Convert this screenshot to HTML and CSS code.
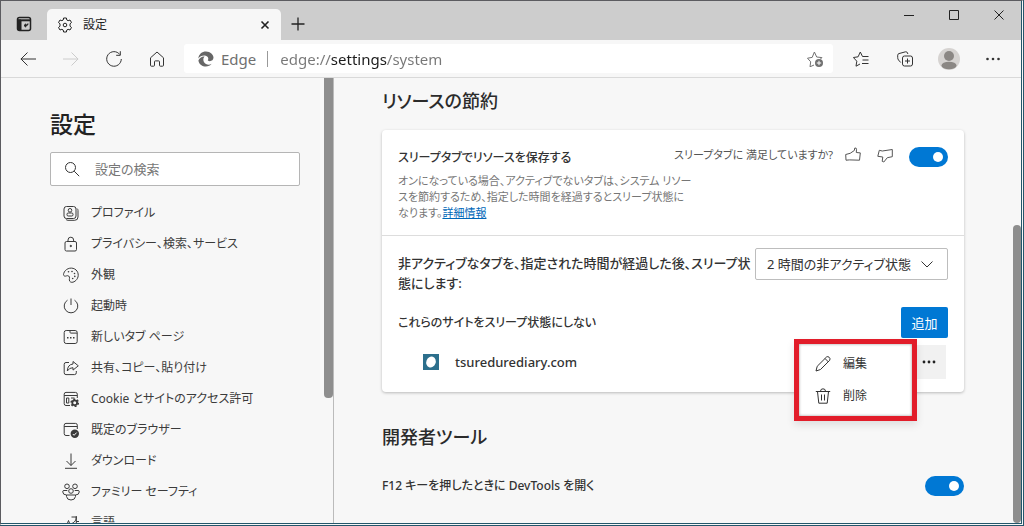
FILE: index.html
```html
<!DOCTYPE html>
<html lang="ja">
<head>
<meta charset="utf-8">
<meta name="viewport" content="width=device-width, initial-scale=1">
<title>設定</title>
<link rel="stylesheet" href="styles.css">
</head>
<body>
<div class="window">
  <header class="titlebar">
    <button class="tab-actions" aria-label="タブ操作メニュー"><svg class="icon" viewBox="0 0 16 16"><rect x="1.500" y="1.500" width="13" height="13" rx="2" stroke-width="1.500"/><path d="M1.500 4.300h13" stroke-width="2"/><path d="M2 4h3v10H3l-1-1z" fill="currentColor"/><path d="M8 9.500l1.800-1.600v3.200zM9 9.500h1.700q1.300 0 1.300-2" fill="currentColor"/></svg></button>
    <div class="tab">
      <svg class="icon" viewBox="0 0 16 16"><path d="M6.600 1h2.800l.4 2 1.300.7 1.900-.7 1.500 2.500-1.500 1.300v2.400l1.500 1.300-1.500 2.500-1.900-.7-1.300.7-.4 2H6.600l-.4-2-1.300-.7-1.900.7-1.500-2.500L3 9.200V6.800L1.500 5.500 3 3l1.900.7L6.200 3z"/><circle cx="8" cy="8" r="1.800"/></svg>
      <span class="tab-title">設定</span>
      <button class="tab-close" aria-label="タブを閉じる"><svg class="icon-tiny" viewBox="0 0 10 10"><path d="M1.500 1.500l7 7M8.500 1.500l-7 7" stroke-width="1.600"/></svg></button>
    </div>
    <button class="new-tab" aria-label="新しいタブ"><svg class="icon" viewBox="0 0 16 16"><path d="M8 1.500v13M1.500 8h13" stroke-width="1.300"/></svg></button>
    <div class="window-controls">
      <button aria-label="最小化"><svg class="icon-tiny" viewBox="0 0 10 10"><path d="M0 5.500h10"/></svg></button>
      <button aria-label="最大化"><svg class="icon-tiny" viewBox="0 0 10 10"><path d="M.5.5h9v9h-9z"/></svg></button>
      <button aria-label="閉じる"><svg class="icon-tiny" viewBox="0 0 10 10"><path d="M.5.5l9 9M9.500.5l-9 9"/></svg></button>
    </div>
  </header>

  <div class="toolbar">
    <div class="nav-buttons">
      <button aria-label="戻る"><svg class="icon" viewBox="0 0 16 16"><path d="M16 8H.8M7.500 1.500L1 8l6.500 6.500"/></svg></button>
      <button aria-label="進む" disabled><svg class="icon" viewBox="0 0 16 16"><path d="M0 8h15.200M8.500 1.500L15 8l-6.500 6.500"/></svg></button>
      <button aria-label="更新"><svg class="icon" viewBox="0 0 16 16"><path d="M13.800 3.500A7.300 7.300 0 1 0 15.300 8M14.300.2v4.100h-4.100"/></svg></button>
      <button aria-label="ホーム"><svg class="icon" viewBox="0 0 16 16"><path d="M1.500 6.800L8 1l6.500 5.800v7.500q0 .9-.9.900h-2.300q-.8 0-.8-.9v-3.600q0-.8-.8-.8H6.300q-.8 0-.8.800v3.600q0 .9-.8.900H2.400q-.9 0-.9-.9z"/></svg></button>
    </div>
    <form class="address-bar">
      <svg class="icon edge-mark" viewBox="0 0 16 16"><path d="M.3 7.500C.8 3 4 .4 8 .4c4.400 0 7.500 3.200 7.500 6.200 0 2.300-1.700 3.600-3.700 3.600-1.400 0-2.200-.5-2-1 .8-1 .7-2.700-.6-3.800C6.800 3.500 2 4.600.3 7.500zM.4 9.500C1.300 6.800 4.300 5 6.600 5.500 5 7.100 5 9.500 6.100 11.300c1.400 2.100 4.600 3.200 7.500 1.500-3 4.500-12 3.700-13.200-3.300z" fill="currentColor" stroke="none"/></svg>
      <label class="address-label" for="url">Edge</label>
      <input class="address-input" id="url" type="text" value="edge://settings/system">
      <button class="add-favorite" type="button" aria-label="お気に入りに追加"><svg class="icon" viewBox="0 0 16 16"><path d="M7 14l-4 1.800.7-5L.5 7.200l4.700-.8L7.400 1l2.300 5 5.200.6-1.600 1.600"/><circle cx="12" cy="12" r="4" fill="currentColor" stroke="none"/><path d="M12 9.800v4.400M9.800 12h4.400" stroke="#fff"/></svg></button>
    </form>
    <div class="browser-actions">
      <button aria-label="お気に入り"><svg class="icon" viewBox="0 0 16 16"><path d="M7 13l-4 2.200.8-5L.4 6.500l4.700-.7L7.300 1l2.200 4.500h6M9.500 9h6M9 12.500h6.500"/></svg></button>
      <button aria-label="コレクション"><svg class="icon" viewBox="0 0 16 16"><rect x="5.500" y="5" width="10" height="10" rx="2"/><path d="M10.500 7.500v5M8 10h5M3.700 11.500L1.500 9Q.7 8 .7 6.500V4.200q0-1.200 1.200-1.600L8.500.8q1.500-.3 2 1.200l.4 1"/></svg></button>
      <button class="avatar" aria-label="プロファイル"><svg viewBox="0 0 22 22"><circle cx="11" cy="11" r="11" fill="#d6d3d1"/><circle cx="11" cy="8" r="5" fill="#8b8784"/><ellipse cx="11" cy="17.500" rx="7.500" ry="3.800" fill="#8b8784"/></svg></button>
      <button aria-label="設定など"><svg class="icon" viewBox="0 0 16 16"><g fill="currentColor" stroke="none"><circle cx="2.500" cy="8" r="1.300"/><circle cx="8" cy="8" r="1.300"/><circle cx="13.500" cy="8" r="1.300"/></g></svg></button>
    </div>
  </div>

  <div class="page">
    <aside class="sidebar">
      <div class="sidebar-content">
        <h1>設定</h1>
        <label class="search">
          <svg class="icon" viewBox="0 0 16 16"><circle cx="6.500" cy="6.500" r="5"/><path d="M10.200 10.200l5 5"/></svg>
          <input type="search" placeholder="設定の検索" aria-label="設定の検索">
        </label>
        <nav class="menu">
          <a href="#profile"><svg class="icon" viewBox="0 0 16 16"><rect x="1" y="1.500" width="12" height="12" rx="2.500"/><path d="M14 3.500q1 .8 1 2V12q0 3.300-3.300 3.300H5q-1.400 0-2.200-1.200"/><circle cx="7" cy="5.300" r="1.800"/><rect x="4" y="8" width="6" height="3" rx="1.200"/></svg>プロファイル</a>
          <a href="#privacy"><svg class="icon" viewBox="0 0 16 16"><rect x="2" y="5.500" width="11.500" height="9.500" rx="1.500"/><path d="M5 5.500V4a2.800 2.800 0 0 1 5.600 0v1.500"/><circle cx="7.800" cy="10" r=".7" fill="currentColor"/></svg>プライバシー、検索、サービス</a>
          <a href="#appearance"><svg class="icon" viewBox="0 0 16 16"><path d="M.7 6.500C2 2 7.500-.3 11.700 2c4 2.200 4.500 7.500 2 10.500-2 2.700-5.500 3.800-7 1.700-1.100-1.700.8-4-1-5.200C4 8 2.900 9.700 1.400 9 .5 8.500.3 7.700.7 6.500z"/><g fill="currentColor" stroke="none"><circle cx="5.500" cy="4.700" r=".8"/><circle cx="9" cy="4.500" r=".8"/><circle cx="11.500" cy="6.500" r=".8"/><circle cx="11.800" cy="9.400" r=".8"/><circle cx="9.700" cy="11.500" r=".8"/></g></svg>外観</a>
          <a href="#startup"><svg class="icon" viewBox="0 0 16 16"><path d="M4.500 2.200a6.800 6.800 0 1 0 7 0M8 .5V7"/></svg>起動時</a>
          <a href="#newtab"><svg class="icon" viewBox="0 0 16 16"><rect x="1.200" y="1.500" width="13" height="13" rx="2"/><path d="M7 1.500v1.800q0 .8.800.8h6.400"/><path d="M4 8.700h1.500M7 8.700h1.500M10 8.700h1.500" stroke-width="1.500"/></svg>新しいタブ ページ</a>
          <a href="#share"><svg class="icon" viewBox="0 0 16 16"><path d="M6 2.500H3q-1.800 0-1.800 1.800v8.500q0 1.800 1.800 1.800h8.500q1.800 0 1.800-1.800V11"/><path d="M10 1.500l5.300 4.300-5.300 4.300V7.700Q6.500 7.500 4.300 11q.3-6.500 5.700-7z"/></svg>共有、コピー、貼り付け</a>
          <a href="#permissions"><svg class="icon" viewBox="0 0 16 16"><path d="M7 14.500H3q-1.800 0-1.800-1.800V3.200q0-1.800 1.800-1.800h9.500q1.800 0 1.800 1.800V7M1.200 4.500h13"/><path d="M3.500 7h2.300v5H3.500zM8 7h3.500"/><circle cx="11.700" cy="11.800" r="2.400" stroke-width="1.800"/><circle cx="11.700" cy="11.800" r="3.600" stroke-width="1.500" stroke-dasharray="1.900 1.870"/></svg>Cookie とサイトのアクセス許可</a>
          <a href="#default-browser"><svg class="icon" viewBox="0 0 16 16"><path d="M6.500 13.500H3q-1.800 0-1.800-1.800V3.200q0-1.800 1.800-1.800h9.500q1.800 0 1.800 1.800V7M1.200 4.500h13"/><circle cx="11.800" cy="11.800" r="4.200" fill="currentColor" stroke="none"/><path d="M9.800 12l1.300 1.300 2.500-2.700" stroke="#f7f7f7"/></svg>既定のブラウザー</a>
          <a href="#downloads"><svg class="icon" viewBox="0 0 16 16"><path d="M8 .5v12M3.500 8L8 12.500 12.500 8M2 15.300h12"/></svg>ダウンロード</a>
          <a href="#family"><svg class="icon icon-wide" viewBox="0 0 18 18"><circle cx="5" cy="3.300" r="2.300"/><circle cx="13" cy="3.300" r="2.300"/><circle cx="9" cy="8" r="2.300"/><path d="M5.300 7.500H2Q.7 7.500.7 8.800q.2 3.200 3.800 3.200M12.700 7.500H16q1.300 0 1.300 1.300-.2 3.200-3.800 3.200M4.500 12h9v1.500q-.5 3.500-4.500 3.500t-4.500-3.500z"/></svg>ファミリー セーフティ</a>
          <a href="#languages"><svg class="icon" viewBox="0 0 16 16"><path d="M2.500 13.500l3-8 3 8M3.500 11h4M8.500 2h4.800q0 4.500-4.300 6.500M13.300 1v14M13.300 6.500H16"/></svg>言語</a>
        </nav>
      </div>
      <div class="scroll-track"><div class="scroll-thumb scroll-thumb-top"></div></div>
    </aside>

    <main class="content">
      <div class="settings">
        <section>
          <h2>リソースの節約</h2>
          <div class="card">
            <div class="card-row sleeping">
              <div class="sleeping-text">
                <label class="setting-title" for="sleep-toggle">スリープタブでリソースを保存する</label>
                <p class="description">オンになっている場合、アクティブでないタブは、システム リソー<br>スを節約するため、指定した時間を経過するとスリープ状態に<br>なります。<a href="#details">詳細情報</a></p>
              </div>
              <div class="feedback">
                <span>スリープタブに 満足していますか?</span>
                <button aria-label="満足"><svg class="icon" viewBox="0 0 16 16"><path d="M.7 7.500l4.500-1.200L9.300 3.500 9.800 1q1.800-.3 1.700 1.300l-.2 3.200 4 .4-.8 7.300-10-.3L1 13.200z"/></svg></button>
                <button aria-label="不満"><svg class="icon" viewBox="0 0 16 16"><path d="M2.300 3.300l3 .7 10-1.500v7.200l-5 1-3.500 4.300-1.600-.7.600-4.300L.8 9.300z"/></svg></button>
              </div>
              <input class="toggle" id="sleep-toggle" type="checkbox" role="switch" checked>
            </div>
            <div class="card-row timeout">
              <label for="timeout">非アクティブなタブを、指定された時間が経過した後、スリープ状<br>態にします:</label>
              <div class="select-box">
                <select id="timeout"><option>2 時間の非アクティブ状態</option></select>
                <svg class="chevron" viewBox="0 0 12 12"><path d="M.5 3.500L6 9l5.500-5.500"/></svg>
              </div>
            </div>
            <div class="card-row sites">
              <span>これらのサイトをスリープ状態にしない</span>
              <button class="add-button">追加</button>
            </div>
            <div class="card-row site">
              <svg class="favicon" viewBox="0 0 16 16"><path fill="#2c6f8c" d="M0 0h16v16H0z"/><ellipse cx="8" cy="8" rx="4.700" ry="5.600" fill="#fff" transform="rotate(20 8 8)"/></svg>
              <span class="site-name">tsuredurediary.com</span>
              <button class="more-button" aria-label="その他のアクション"><svg class="icon" viewBox="0 0 16 16"><g fill="currentColor" stroke="none"><circle cx="3" cy="8" r="1.400"/><circle cx="8" cy="8" r="1.400"/><circle cx="13" cy="8" r="1.400"/></g></svg></button>
              <div class="popup" role="menu">
                <button role="menuitem"><svg class="icon" viewBox="0 0 16 16"><path d="M1 15l1.200-4.700L11.500 1q1.300-1 2.700.3t.5 3L5.500 13.500zM10 2.500L13.500 6"/></svg>編集</button>
                <button role="menuitem"><svg class="icon" viewBox="0 0 16 16"><path d="M.8 3.500h14.400M5.500 3.300Q5.500.8 8 .8t2.500 2.500M2.500 3.700l1.300 11.500h8.400l1.300-11.500M6.500 6.500v6M9.500 6.500v6"/></svg>削除</button>
              </div>
            </div>
          </div>
        </section>
        <section>
          <h2>開発者ツール</h2>
          <div class="devtools">
            <label for="f12">F12 キーを押したときに DevTools を開く</label>
            <input class="toggle" id="f12" type="checkbox" role="switch" checked>
          </div>
        </section>
      </div>
      <div class="scroll-track scroll-track-end"><div class="scroll-thumb scroll-thumb-end"></div></div>
    </main>
  </div>
</div>
</body>
</html>
```
FILE: styles.css
```css
* { box-sizing: border-box; }
body {
  margin: 0;
  font-family: "Noto Sans", "Noto Sans CJK JP", sans-serif;
  font-size: 12px;
  line-height: 16px;
  font-feature-settings: "palt";
  color: #333;
}
button, input, select { font: inherit; font-feature-settings: inherit; color: inherit; }
button { display: flex; align-items: center; justify-content: center; padding: 0; border: 0; background: none; }
svg { display: block; flex: none; fill: none; stroke: currentColor; }
.icon { width: 16px; height: 16px; }
.icon-tiny { width: 10px; height: 10px; }
.icon-wide { width: 18px; height: 18px; margin: 0 -1px; }

.window {
  display: flex;
  flex-direction: column;
  height: 100vh;
  overflow: hidden;
  background: #f7f7f7;
  border: 1px solid #5c5c60;
  border-right: 3px double #24566b;
  border-bottom: 3px double #24566b;
}

.titlebar { display: flex; align-items: flex-end; height: 39px; flex: none; background: #cdcdcd; color: #222; }
.tab-actions { width: 46px; height: 32px; }
.tab {
  display: flex;
  align-items: center;
  gap: 10px;
  width: 234px;
  height: 31px;
  padding: 0 11px 0 10px;
  background: #f7f7f7;
  border-radius: 5px 5px 0 0;
}
.tab-title { flex: 1; }
.new-tab { width: 34px; height: 32px; }
.window-controls { display: flex; align-self: flex-start; margin-left: auto; }
.window-controls button { width: 45px; height: 28px; }

.toolbar {
  display: flex;
  align-items: center;
  flex: none;
  height: 38px;
  padding-right: 6px;
  border-bottom: 1px solid #d9d9d9;
}
.nav-buttons, .browser-actions { display: flex; }
.nav-buttons { padding: 0 6px 0 5px; }
.nav-buttons button { width: 43px; height: 30px; }
.nav-buttons button:disabled { color: #ccc; }
.browser-actions { margin-left: 6px; }
.browser-actions button { width: 44px; height: 30px; }
.avatar svg { width: 22px; height: 22px; stroke: none; }
.address-bar {
  display: flex;
  align-items: center;
  flex: 1;
  min-width: 0;
  height: 29px;
  padding: 0 10px 0 14px;
  background: #fff;
  border-radius: 3px;
  color: #707070;
  font-size: 15px;
}
.edge-mark { color: #666; }
.address-label { padding: 0 11px 0 7px; border-right: 1px solid #999; }
.address-input {
  flex: 1;
  min-width: 0;
  height: 24px;
  line-height: 24px;
  margin-left: 12px;
  padding: 0;
  border: 0;
  outline: 0;
  color: transparent;
  caret-color: #333;
  background: linear-gradient(to right, #777 51px, #1c1c1c 51px, #1c1c1c 107px, #777 107px);
  background-clip: text;
  -webkit-background-clip: text;
}

.page { display: flex; flex: 1; min-height: 0; }
.sidebar { display: flex; width: 333px; flex: none; border-right: 1px solid #bbb; }
.sidebar-content { flex: 1; min-width: 0; overflow: hidden; padding: 30px 24px 0 49px; }
h1 { margin: 0 0 12px; font-size: 23px; line-height: 32px; font-weight: 500; color: #222; }
.search {
  display: flex;
  align-items: center;
  gap: 15px;
  height: 34px;
  padding: 0 13px;
  background: #fff;
  border: 1px solid #b5b5b5;
  border-radius: 2px;
  font-size: 13px;
}
.search input { flex: 1; min-width: 0; padding: 0; border: 0; outline: 0; background: none; }
.search input::placeholder { color: #767676; }
.menu { display: flex; flex-direction: column; padding: 11px 0 0 13px; }
.menu a {
  display: flex;
  align-items: center;
  flex: none;
  gap: 12px;
  height: 31px;
  color: #3b3b3b;
  text-decoration: none;
  white-space: nowrap;
}

.scroll-track { display: flex; flex-direction: column; width: 9px; flex: none; }
.scroll-track-end { justify-content: flex-end; width: 8px; }
.scroll-thumb { background: #8e8e8e; }
.scroll-thumb-top { height: 72%; border-radius: 0 0 4px 4px; }
.scroll-thumb-end { height: 67%; border-radius: 4px; }

.content { display: flex; flex: 1; min-width: 0; }
.settings { flex: 1; min-width: 0; padding: 11px 49px 0 48px; }
h2 { margin: 0; font-size: 18px; line-height: 24px; font-weight: 500; color: #2b2b2b; }
.card {
  margin: 17px 0 33px;
  background: #fff;
  border-radius: 4px;
  box-shadow: 0 1px 3px rgba(0, 0, 0, 0.25);
  white-space: nowrap;
}
.card-row { display: flex; padding: 0 16px; }
.sleeping { padding-top: 17px; padding-bottom: 14px; border-bottom: 1px solid #ddd; }
.sleeping-text { flex: 1; min-width: 0; padding-top: 2px; }
.setting-title { font-weight: 500; line-height: 18px; }
.description { margin: 6px 0 0; font-size: 11px; line-height: 16px; color: #767676; }
.description a { color: #0067b8; }
.feedback { display: flex; gap: 16px; align-items: center; height: 16px; font-size: 11px; color: #555; }
.feedback span { margin-right: -4px; }
.feedback button { height: 20px; }
.toggle {
  position: relative;
  appearance: none;
  width: 39px;
  height: 20px;
  margin: 0 0 0 16px;
  flex: none;
  border-radius: 10px;
  background: #c4c4c4;
}
.toggle::after {
  content: "";
  position: absolute;
  top: 5px;
  left: 5px;
  width: 10px;
  height: 10px;
  border-radius: 50%;
  background: #fff;
}
.toggle:checked { background: #0078d4; }
.toggle:checked::after { left: 24px; }

.timeout { justify-content: space-between; padding-top: 12px; font-size: 13px; line-height: 20px; font-weight: 500; }
.timeout label { padding-top: 5px; }
.select-box { display: grid; align-items: center; height: 32px; font-weight: 400; width: 193px; }
.select-box select {
  grid-area: 1 / 1;
  appearance: none;
  width: 100%;
  height: 32px;
  padding: 0 32px 0 11px;
  background: #fff;
  border: 1px solid #bdbdbd;
  border-radius: 2px;
}
.chevron { grid-area: 1 / 1; justify-self: end; width: 12px; height: 12px; margin-right: 15px; pointer-events: none; }
.sites { align-items: center; justify-content: space-between; padding-top: 14px; font-weight: 500; }
.add-button { width: 47px; height: 31px; border-radius: 2px; background: #0078d4; color: #fff; font-size: 13px; font-weight: 400; }
.site { position: relative; align-items: center; padding: 7px 18px 13px 41px; }
.favicon { width: 16px; height: 16px; stroke: none; }
.site-name { flex: 1; margin-left: 16px; font-size: 13px; font-weight: 500; }
.more-button { width: 35px; height: 34px; background: #f1f1f1; color: #222; }
.popup {
  position: absolute;
  top: 1px;
  right: 47px;
  width: 123px;
  padding: 4px 0;
  background: #fff;
  border: 5px solid #e21d2a;
  box-shadow: 0 4px 8px rgba(0, 0, 0, 0.1), inset 0 0 3px rgba(0, 0, 0, 0.4);
}
.popup button { justify-content: flex-start; gap: 12px; width: 100%; height: 32px; padding-left: 16px; }
.devtools { display: flex; align-items: center; justify-content: space-between; padding-top: 27px; font-weight: 500; }
```
